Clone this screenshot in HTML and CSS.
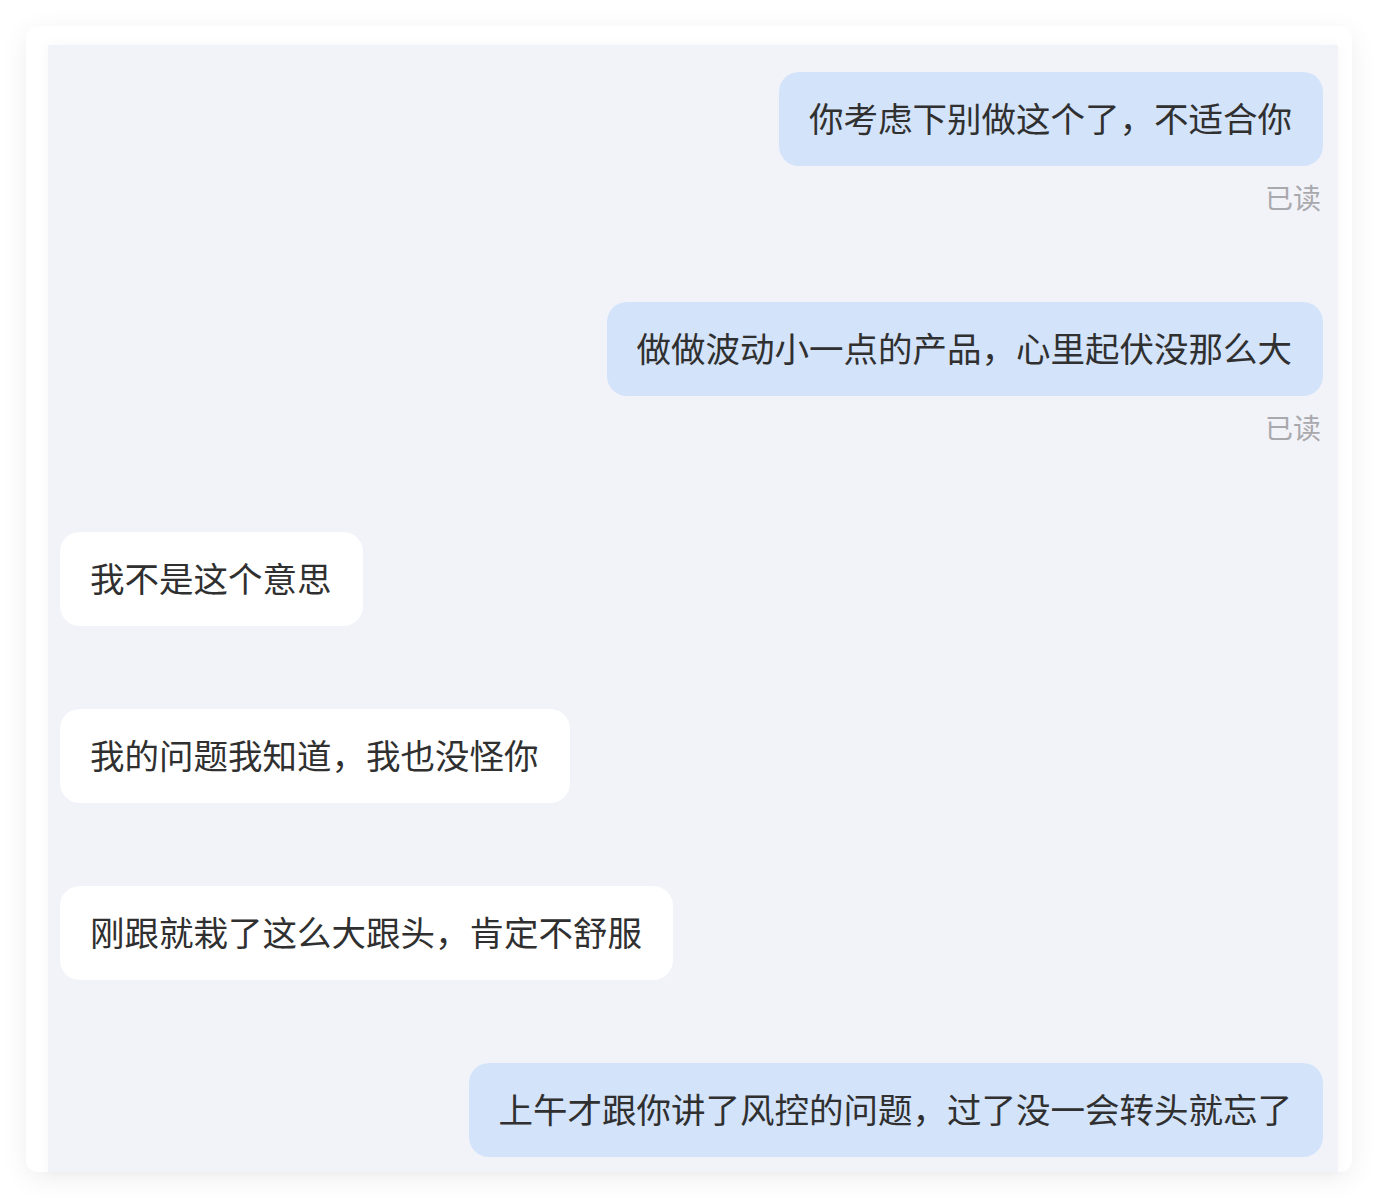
FILE: index.html
```html
<!DOCTYPE html>
<html lang="zh-CN">
<head>
    <meta charset="UTF-8">
    <meta name="viewport" content="width=device-width, initial-scale=1.0">
    <title>聊天记录</title>
    <link rel="stylesheet" href="styles.css">
</head>
<body>

    <div class="card">
        <div class="chat">
            <div class="msg out">
                <div class="bubble">你考虑下别做这个了，不适合你</div>
                <div class="receipt">已读</div>
            </div>
            <div class="msg out">
                <div class="bubble">做做波动小一点的产品，心里起伏没那么大</div>
                <div class="receipt">已读</div>
            </div>
            <div class="msg in">
                <div class="bubble">我不是这个意思</div>
            </div>
            <div class="msg in">
                <div class="bubble">我的问题我知道，我也没怪你</div>
            </div>
            <div class="msg in">
                <div class="bubble">刚跟就栽了这么大跟头，肯定不舒服</div>
            </div>
            <div class="msg out">
                <div class="bubble">上午才跟你讲了风控的问题，过了没一会转头就忘了</div>
            </div>
        </div>
    </div>

</body>
</html>
```

FILE: styles.css
```css
body {
    margin: 0;
    padding-bottom: 26px;
    background-color: #ffffff;
    font-family: "Noto Sans CJK SC", "Noto Sans", sans-serif;
    color: #303030;
}
.card {
    margin: 26px 26px 0 26px;
    height: 1146px;
    padding: 19px 14px 0 22px;
    box-sizing: border-box;
    background-color: #ffffff;
    border-radius: 12px;
    box-shadow: 0 6px 28px rgba(0, 0, 0, 0.07);
    display: flex;
    flex-direction: column;
}
.chat {
    flex: 1;
    overflow: hidden;
    background-color: #f2f3f8;
    box-shadow: 0 0 12px rgba(0, 0, 0, 0.04);
    padding: 27px 15px 0 12px;
    display: flex;
    flex-direction: column;
    gap: 83px;
}
.msg {
    display: flex;
    flex-direction: column;
}
.msg.out {
    align-items: flex-end;
}
.msg.in {
    align-items: flex-start;
}
.bubble {
    font-size: 34.5px;
    line-height: 48px;
    padding: 21px 31px 25px 30px;
    border-radius: 20px;
    white-space: nowrap;
}
.out .bubble {
    background-color: #d3e3fa;
}
.in .bubble {
    background-color: #ffffff;
}
.receipt {
    margin-top: 11px;
    font-size: 28px;
    line-height: 41px;
    color: #a9a9ad;
    padding-right: 2px;
    padding-bottom: 1px;
}
```
